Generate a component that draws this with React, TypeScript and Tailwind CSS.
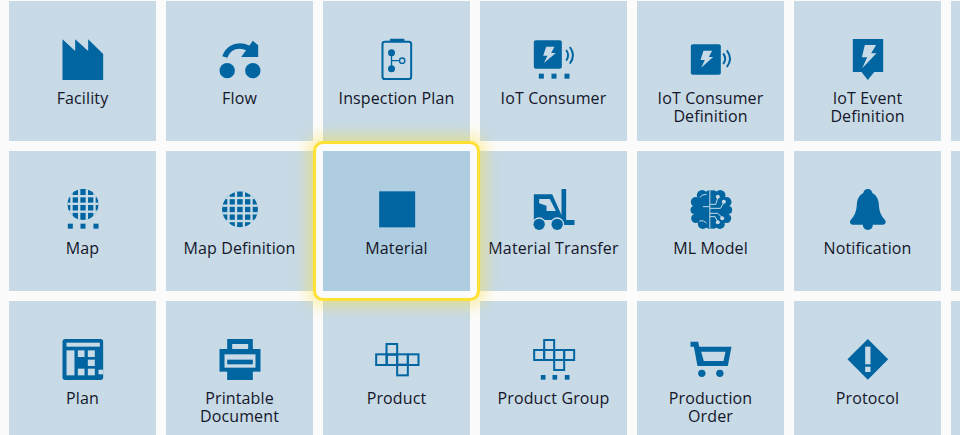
import React from 'react';

const BLUE = '#0065a1';
const TILE = '#c7dae6';

// Icon drawings are traced in 3x coordinates, then shifted into the 180x150 viewBox.
const Icon = ({ a, b, children }: { a: number; b: number; children: React.ReactNode }) => (
  <svg className="block h-[50px] w-[60px]" viewBox="0 0 180 150" fill={BLUE}>
    <g transform={`translate(${-a} ${-b})`}>{children}</g>
  </svg>
);

const Dots = ({ xs, y, w = 15, h = 15 }: { xs: number[]; y: number; w?: number; h?: number }) => (
  <>
    {xs.map((x) => (
      <rect key={x} x={x} y={y} width={w} height={h} />
    ))}
  </>
);

const Waves = ({ x, y }: { x: number; y: number }) => (
  <g fill="none" stroke={BLUE} strokeWidth="6">
    <path d={`M${x} ${y + 9} Q${x + 12} ${y + 25} ${x} ${y + 41}`} />
    <path d={`M${x + 11} ${y} Q${x + 30} ${y + 25} ${x + 11} ${y + 50}`} />
  </g>
);

const Bolt = ({ points }: { points: string }) => <polygon points={points} fill={TILE} />;

const Globe = ({ id, cx, cy, r, xs, ys }: { id: string; cx: number; cy: number; r: number; xs: number[]; ys: number[] }) => (
  <>
    <clipPath id={id}>
      <circle cx={cx} cy={cy} r={r} />
    </clipPath>
    <g clipPath={`url(#${id})`}>
      <circle cx={cx} cy={cy} r={r} />
      {xs.map((x) => (
        <rect key={x} x={x - 3.5} y={cy - r} width="7" height={r * 2} fill={TILE} />
      ))}
      {ys.map((y) => (
        <rect key={y} x={cx - r} y={y - 3.5} width={r * 2} height="7" fill={TILE} />
      ))}
    </g>
  </>
);

const Cells = ({ cells, s }: { cells: [number, number][]; s: number }) => (
  <g fill="none" stroke={BLUE} strokeWidth="6">
    {cells.map(([x, y]) => (
      <rect key={`${x}-${y}`} x={x} y={y} width={s} height={s} />
    ))}
  </g>
);

const tiles: { label: string; icon?: React.ReactNode; selected?: boolean }[] = [
  {
    label: 'Facility',
    icon: (
      <Icon a={157.5} b={105}>
        <polygon points="186,118 224,153 224,118 263,153 263,118 308,162 308,240 186,240" />
      </Icon>
    ),
  },
  {
    label: 'Flow',
    icon: (
      <Icon a={628.5} b={105}>
        <circle cx="680" cy="212" r="23" />
        <circle cx="757" cy="212" r="23" />
        <path d="M673 171C681 147 700 138 718 138C734 138 749 146 760 160" fill="none" stroke={BLUE} strokeWidth="16" />
        <polygon points="757,122 773,136 773,171 722,171" />
      </Icon>
    ),
  },
  {
    label: 'Inspection Plan',
    icon: (
      <Icon a={139.5} b={105}>
        <rect x="186" y="125" width="86" height="112" rx="7" fill="none" stroke={BLUE} strokeWidth="6" />
        <rect x="208" y="116" width="44" height="9" rx="3" />
        <circle cx="213" cy="158" r="10.5" />
        <circle cx="213" cy="206" r="10.5" />
        <path d="M213 158V206M213 182H238" stroke={BLUE} strokeWidth="4" />
        <circle cx="245" cy="182" r="8" fill="none" stroke={BLUE} strokeWidth="4" />
      </Icon>
    ),
  },
  {
    label: 'IoT Consumer',
    icon: (
      <Icon a={610.5} b={105}>
        <rect x="640" y="121" width="84" height="85" rx="6" />
        <Bolt points="677,140 702,140 692,159 706,159 670,189 681,167 668,167" />
        <Waves x={737} y={141} />
        <Dots xs={[655, 693, 732]} y={221} />
      </Icon>
    ),
  },
  {
    label: 'IoT Consumer Definition',
    icon: (
      <Icon a={121.5} b={105}>
        <rect x="151" y="133" width="90" height="91" rx="6" />
        <Bolt points="189,152 215,152 205,171 218,171 182,203 193,180 180,180" />
        <Waves x={248} y={151} />
      </Icon>
    ),
  },
  {
    label: 'IoT Event Definition',
    icon: (
      <Icon a={592.5} b={105}>
        <polygon points="637,117 728,117 728,216 701,216 682,240 663,216 637,216" />
        <Bolt points="673,135 707,135 692,160 708,160 665,205 680,172 664,172" />
      </Icon>
    ),
  },
  { label: '' },
  {
    label: 'Map',
    icon: (
      <Icon a={157.5} b={120}>
        <Globe id="map" cx={247.5} cy={178} r={47} xs={[213, 236, 259, 282]} ys={[153.5, 176.5, 200]} />
        <Dots xs={[202, 240, 279]} y={236} />
      </Icon>
    ),
  },
  {
    label: 'Map Definition',
    icon: (
      <Icon a={628.5} b={120}>
        <Globe id="mapdef" cx={718.5} cy={193} r={54} xs={[684, 706.5, 730, 753]} ys={[159, 182, 205, 228]} />
      </Icon>
    ),
  },
  {
    label: 'Material',
    selected: true,
    icon: (
      <Icon a={199.5} b={150}>
        <rect x="236" y="169" width="108" height="108" />
      </Icon>
    ),
  },
  {
    label: 'Material Transfer',
    icon: (
      <Icon a={670.5} b={150}>
        <path d="M783 162H797V255H822V270H783V240L755 178H700V255H783Z" />
        <polygon points="716,192 748,192 766,228 738,228 738,212 716,205" fill={TILE} />
        <circle cx="716" cy="268" r="21" fill={TILE} />
        <circle cx="770" cy="268" r="21" fill={TILE} />
        <circle cx="716" cy="268" r="17" />
        <circle cx="770" cy="268" r="17" />
      </Icon>
    ),
  },
  {
    label: 'ML Model',
    icon: (
      <Icon a={121.5} b={120}>
        <ellipse cx="212" cy="193" rx="50" ry="50" />
        {[
          [185, 151, 16], [207, 149, 13], [166, 171, 15], [162, 195, 12], [166, 220, 14], [187, 237, 15], [207, 238, 13],
          [239, 151, 16], [218, 149, 13], [258, 171, 15], [263, 195, 12], [258, 220, 14], [238, 237, 15], [218, 238, 13],
        ].map(([x, y, r]) => (
          <circle key={`${x}-${y}`} cx={x} cy={y} r={r} />
        ))}
        <g fill="none" stroke={TILE} strokeWidth="3">
          <path d="M208 136V250" />
          <path d="M208 185H187M208 178H226L232 157M208 190H240L250 172M208 205H232L245 218M208 215H224L232 232" />
          <path d="M178 158Q182 148 198 148M176 228Q190 224 198 234" />
        </g>
        <g fill={TILE}>
          <circle cx="232" cy="155" r="6" />
          <circle cx="250" cy="170" r="6" />
          <circle cx="245" cy="220" r="6" />
          <circle cx="232" cy="232" r="6" />
        </g>
      </Icon>
    ),
  },
  {
    label: 'Notification',
    icon: (
      <Icon a={592.5} b={120}>
        <path d="M682 132C690 132 695 138 696 145C708 151 714 163 715 178C716 200 722 213 733 224C738 230 735 239 727 239H637C629 239 626 230 631 224C642 213 648 200 649 178C650 163 656 151 668 145C669 138 674 132 682 132Z" />
        <circle cx="682" cy="240" r="15" />
      </Icon>
    ),
  },
  { label: '' },
  {
    label: 'Plan',
    icon: (
      <Icon a={157.5} b={120}>
        <rect x="186" y="132" width="122" height="123" rx="8" />
        <g fill={TILE}>
          <rect x="198" y="143" width="100" height="12" />
          <rect x="198" y="166" width="24" height="75" />
          <rect x="232" y="166" width="20" height="20" />
          <rect x="262" y="166" width="21" height="20" />
          <rect x="262" y="194" width="21" height="19" />
          <rect x="232" y="221" width="20" height="20" />
          <rect x="262" y="221" width="21" height="20" />
          <rect x="294" y="224" width="14" height="14" />
        </g>
      </Icon>
    ),
  },
  {
    label: 'Printable Document',
    icon: (
      <Icon a={628.5} b={120}>
        <rect x="680" y="132" width="77" height="40" />
        <rect x="695" y="147" width="48" height="16" fill={TILE} />
        <rect x="657" y="162" width="123" height="68" />
        <rect x="680" y="222" width="77" height="33" />
        <rect x="672" y="178" width="93" height="40" fill={TILE} />
        <rect x="680" y="194" width="77" height="14" />
      </Icon>
    ),
  },
  {
    label: 'Product',
    icon: (
      <Icon a={139.5} b={120}>
        <Cells s={32} cells={[[198, 147], [167, 178], [198, 178], [230, 178], [262, 178], [230, 209]]} />
      </Icon>
    ),
  },
  {
    label: 'Product Group',
    icon: (
      <Icon a={610.5} b={120}>
        <Cells s={30} cells={[[671, 135], [641, 165], [671, 165], [701, 165], [731, 165], [701, 195]]} />
        <Dots xs={[661, 696, 733]} y={240} w={14} h={14} />
      </Icon>
    ),
  },
  {
    label: 'Production Order',
    icon: (
      <Icon a={121.5} b={120}>
        <path fillRule="evenodd" d="M150 140H173L176 155H273L262 213H171L160 155H150ZM182 170L190 198H249L255 170Z" />
        <circle cx="184" cy="235" r="11" />
        <circle cx="238" cy="235" r="11" />
      </Icon>
    ),
  },
  {
    label: 'Protocol',
    icon: (
      <Icon a={592.5} b={120}>
        <polygon points="682,132 743,193 682,254 621,193" />
        <rect x="674" y="155" width="16" height="53" fill={TILE} />
        <rect x="674" y="215" width="16" height="16" fill={TILE} />
      </Icon>
    ),
  },
  { label: '' },
];

const Tile = ({ label, icon, selected }: { label: string; icon?: React.ReactNode; selected?: boolean }) => (
  <div className={selected ? 'relative z-10 h-[140px]' : 'h-[140px] bg-[#c7dae6]'}>
    {selected && (
      <>
        <div className="absolute -inset-[10px] rounded-[10px] border-[3px] border-[#fee134] bg-[#fbfbfb] shadow-[0_0_14px_6px_rgba(254,225,52,0.42)]" />
        <div className="absolute inset-0 bg-[#aecde0]" />
      </>
    )}
    <div className="relative flex flex-col items-center px-2 pt-[34px] text-center">
      {icon}
      <div className="mt-1 text-[16px] leading-[18px] tracking-[0.12px] text-[#15162a]">{label}</div>
    </div>
  </div>
);

export default function App() {
  return (
    <div className="h-[435px] w-[960px] overflow-hidden bg-[#fbfbfb] font-['Open_Sans',sans-serif]">
      <div className="grid grid-cols-[repeat(7,147px)] gap-[10px] pl-[9px] pt-px">
        {tiles.map((tile, i) => (
          <Tile key={i} label={tile.label} icon={tile.icon} selected={tile.selected} />
        ))}
      </div>
    </div>
  );
}
